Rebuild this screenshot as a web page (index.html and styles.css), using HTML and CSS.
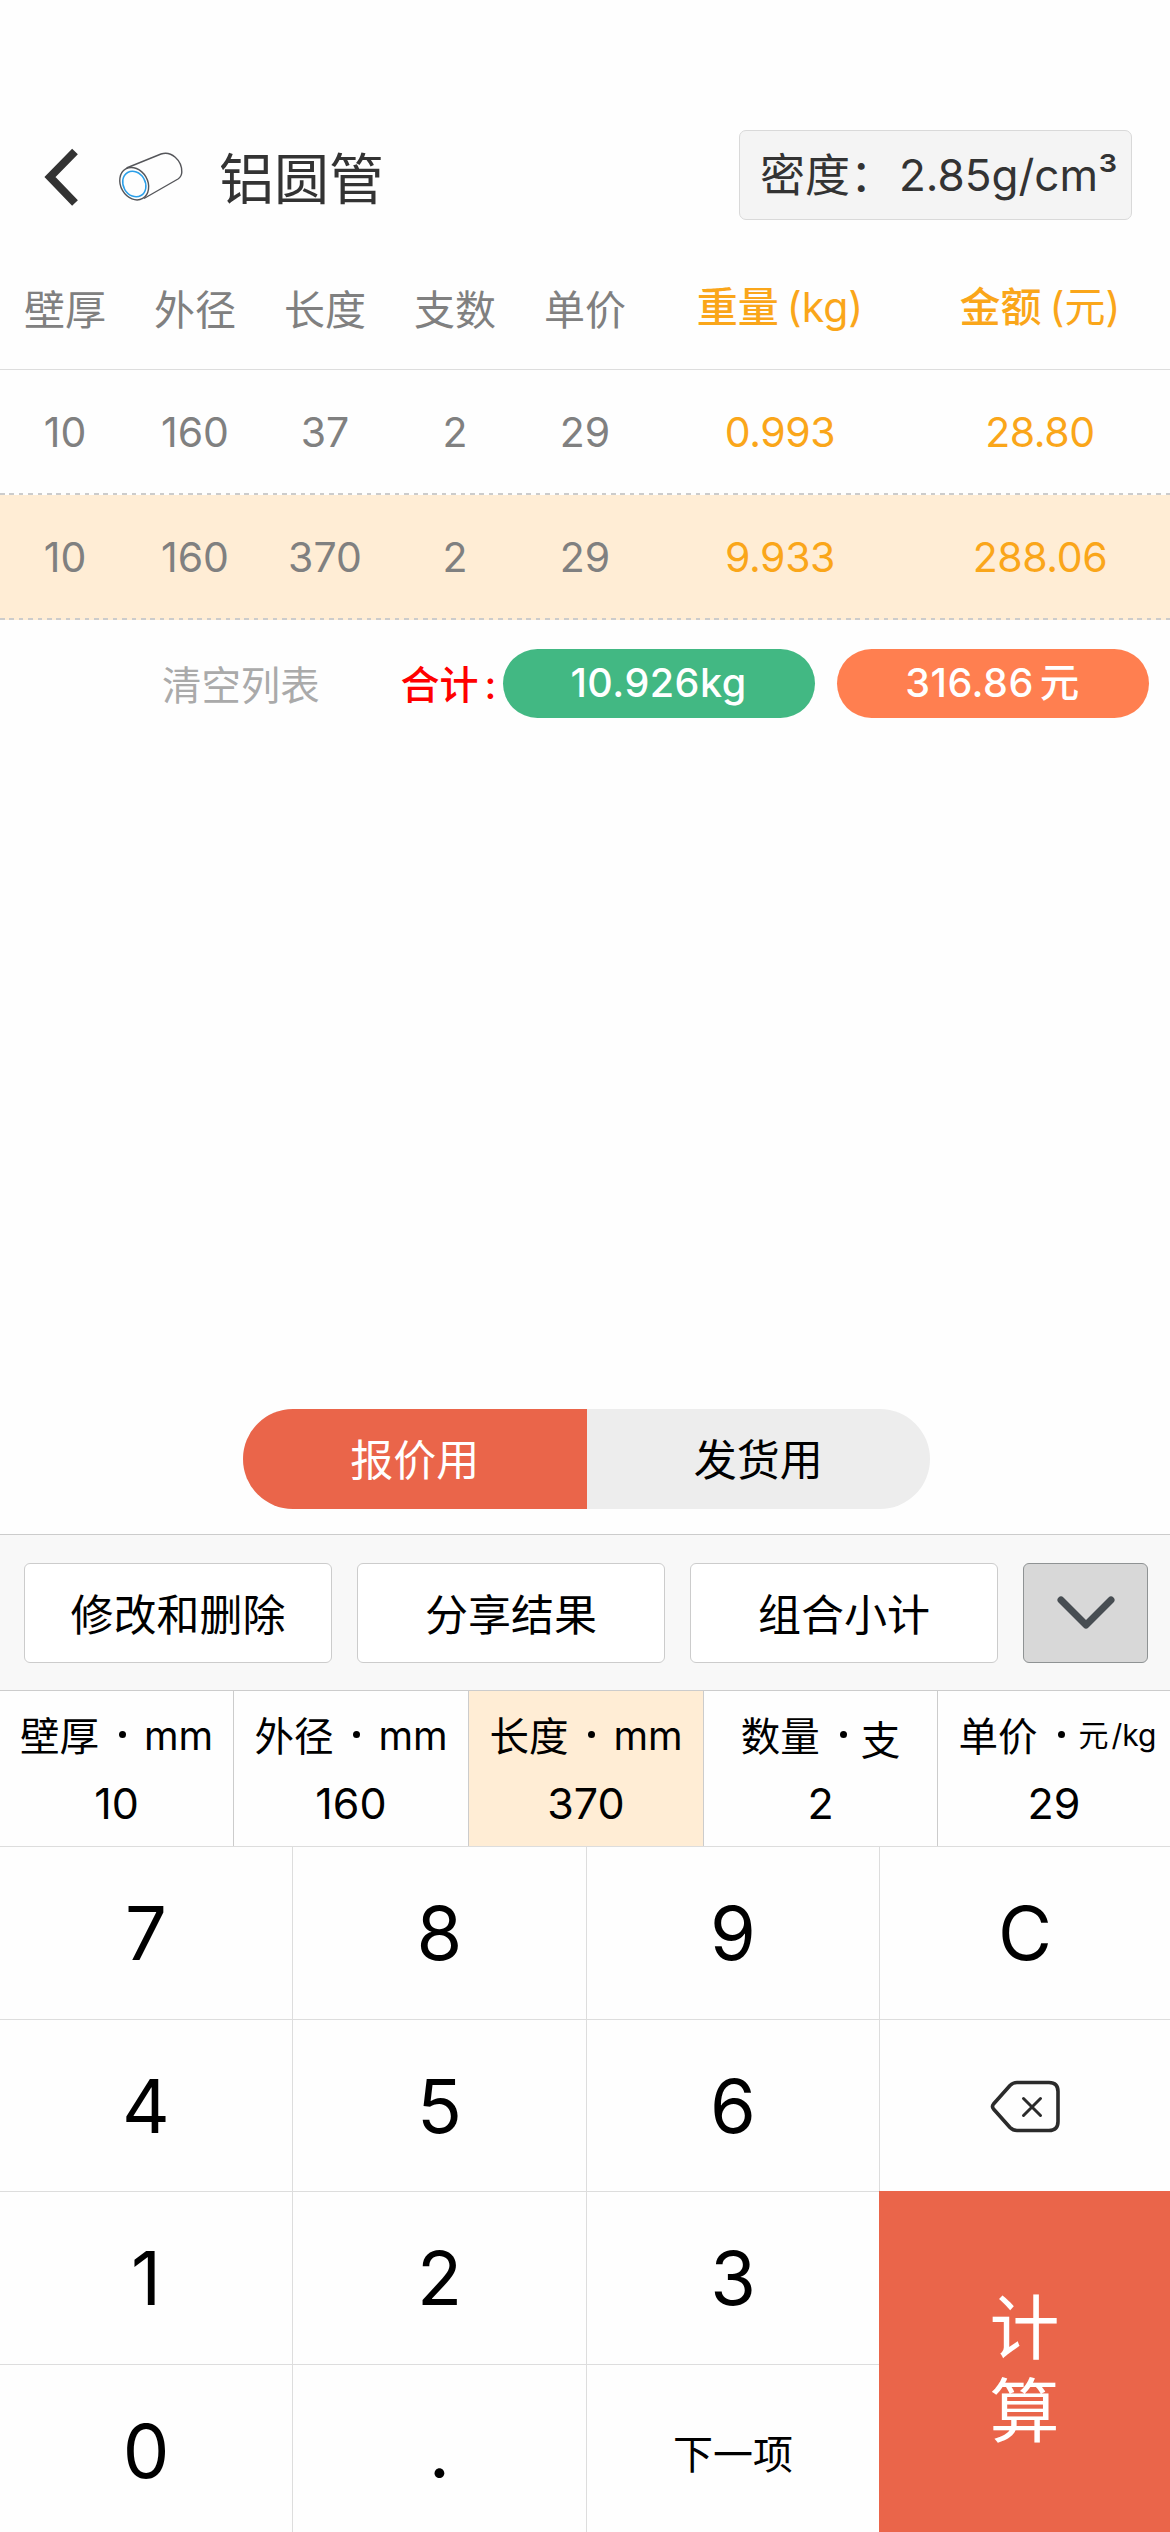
FILE: index.html
```html
<!DOCTYPE html>
<html lang="zh-CN">
<head>
<meta charset="utf-8">
<title>铝圆管</title>
<link rel="stylesheet" href="styles.css">
</head>
<body>
<main class="app">
  <header class="header">
    <svg class="back" viewBox="0 0 36 60" width="36" height="60"><path d="M32 4.500 7 30 32 56" fill="none" stroke="#333" stroke-width="8"/></svg>
    <svg class="tube" viewBox="0 0 68 56" width="68" height="56" fill="none">
      <g stroke="#55565a" stroke-width="1.400">
        <ellipse cx="17.200" cy="35.700" rx="13.500" ry="17" transform="rotate(-30 17.200 35.700)"/>
        <path d="M9.500 20 44 6C54 2.500 65 12 64.800 24Q64.700 28.500 61 31L27 50.500"/>
      </g>
      <ellipse cx="17.300" cy="36" rx="11" ry="13.300" transform="rotate(-30 17.300 36)" stroke="#2b9fe8" stroke-width="1.500"/>
    </svg>
    <h1 class="title">铝圆管</h1>
    <div class="density">密度：<span class="density-value">2.85g/cm³</span></div>
  </header>

  <section class="table">
    <div class="row head">
      <span>壁厚</span><span>外径</span><span>长度</span><span>支数</span><span>单价</span>
      <span class="gold">重量<i class="latin">(kg)</i></span><span class="gold">金额<i class="latin">(元)</i></span>
    </div>
    <div class="row">
      <span>10</span><span>160</span><span>37</span><span>2</span><span>29</span>
      <span class="gold">0.993</span><span class="gold">28.80</span>
    </div>
    <div class="row active">
      <span>10</span><span>160</span><span>370</span><span>2</span><span>29</span>
      <span class="gold">9.933</span><span class="gold">288.06</span>
    </div>
  </section>

  <section class="totals">
    <span class="clear">清空列表</span>
    <span class="sum">合计<i class="colon">:</i></span>
    <span class="pill green">10.926kg</span>
    <span class="pill coral">316.86<i class="unit">元</i></span>
  </section>

  <div class="toggle"><span class="on">报价用</span><span>发货用</span></div>

  <section class="actions">
    <button class="btn">修改和删除</button>
    <button class="btn">分享结果</button>
    <button class="btn">组合小计</button>
    <button class="btn collapse"><svg viewBox="0 0 60 36" width="60" height="36"><path d="M5 5 30 30 55 5" fill="none" stroke="#474d52" stroke-width="7" stroke-linecap="round" stroke-linejoin="round"/></svg></button>
  </section>

  <section class="fields">
    <div class="field"><div class="label"><span>壁厚</span><b></b><span class="mm">mm</span></div><div class="value">10</div></div>
    <div class="field"><div class="label"><span>外径</span><b></b><span class="mm">mm</span></div><div class="value">160</div></div>
    <div class="field active"><div class="label"><span>长度</span><b></b><span class="mm">mm</span></div><div class="value">370</div></div>
    <div class="field"><div class="label"><span>数量</span><b></b><span class="zhi">支</span></div><div class="value">2</div></div>
    <div class="field"><div class="label price"><span>单价</span><b></b><span class="per">元<i>/kg</i></span></div><div class="value">29</div></div>
  </section>

  <section class="keypad">
    <div class="key">7</div><div class="key">8</div><div class="key">9</div><div class="key last">C</div>
    <div class="key">4</div><div class="key">5</div><div class="key">6</div>
    <div class="key last"><svg viewBox="0 0 72 54" width="72" height="54" fill="none" stroke="#2b2b2b" stroke-linecap="round" stroke-linejoin="round"><path stroke-width="3.600" d="M28 3.500H60Q69 3.500 69 12.500V42.500Q69 51.500 60 51.500H28Q24 51.500 21 48.500L4.500 30Q2.500 27.500 4.500 25L21 6.500Q24 3.500 28 3.500Z"/><path stroke-width="3" d="M34.500 19.500 51.500 36.500M51.500 19.500 34.500 36.500"/></svg></div>
    <div class="key">1</div><div class="key">2</div><div class="key">3</div>
    <div class="key">0</div><div class="key">.</div><div class="key next">下一项</div>
    <div class="key calc"><span>计</span><span>算</span></div>
  </section>
</main>
</body>
</html>
```
FILE: styles.css
```css
* { box-sizing: border-box; }
html, body { margin: 0; }
body {
  width: 1170px;
  height: 2532px;
  background: #fefefe;
  color: #000;
  font-family: Inter, "Noto Sans CJK SC", sans-serif;
}
i { font-style: normal; }
.app { display: flex; flex-direction: column; height: 2532px; overflow: hidden; }
.app > * { flex-shrink: 0; }

.header {
  display: flex;
  align-items: center;
  height: 250px;
  padding: 100px 38px 0 43px;
  color: #333;
}
.back { margin-top: 3px; }
.tube { margin: 2px 0 0 38px; }
.title { margin: 7px 0 0 34px; font-size: 55px; font-weight: 400; line-height: 80px; }
.density {
  display: flex;
  align-items: center;
  width: 393px;
  height: 90px;
  margin-left: auto;
  padding: 0 0 5px 20px;
  border: 1px solid #d9d9d9;
  border-radius: 7px;
  background: #f4f4f4;
  font-size: 45px;
  white-space: nowrap;
}
.density-value { margin-left: 4px; padding-top: 5px; font-size: 44px; }

.row {
  display: grid;
  grid-template-columns: repeat(5, 130px) 260px 260px;
  align-items: center;
  height: 125px;
  padding-bottom: 2px;
  text-align: center;
  color: #808080;
  font-size: 41px;
  background: repeating-linear-gradient(90deg, #ccc 0 4.700px, transparent 4.700px 9.400px) 0 100% / 100% 2px no-repeat;
}
.row.head { height: 120px; padding-bottom: 6px; background: none; border-bottom: 1px solid #ddd; }
.row.active { background-color: #ffedd5; }
.gold { color: #faa61a; letter-spacing: -0.4px; }
.head .gold { margin-top: -6px; font-weight: 500; letter-spacing: 0; }
.latin { margin-left: 8px; font-weight: 400; }

.totals { display: flex; align-items: center; height: 129px; padding: 0 21px 2px 0; }
.clear { margin: -3px 0 0 162px; color: #aaa; font-size: 39.400px; }
.sum { width: 102px; margin: -3px 0 0 81px; color: #f00; font-size: 39px; font-weight: 500; white-space: nowrap; }
.colon { margin-left: 6px; }
.pill {
  width: 312px;
  height: 69px;
  border-radius: 35px;
  color: #fff;
  font-size: 39.500px;
  font-weight: 500;
  letter-spacing: 0.5px;
  line-height: 69px;
  text-align: center;
}
.green { background: #42b883; }
.coral { margin-left: 22px; background: #ff7f50; }
.unit { margin-left: 6px; }

.toggle {
  display: flex;
  width: 687px;
  height: 100px;
  margin: 660px 0 25px 243px;
  border-radius: 50px;
  overflow: hidden;
  background: #ededed;
  font-size: 43px;
  line-height: 102px;
  text-align: center;
}
.toggle span { flex: 1; }
.toggle .on { background: #ea654a; color: #fff; }

.actions {
  display: flex;
  gap: 25px;
  height: 156px;
  padding: 28px 22px 0 24px;
  border-top: 1px solid #ccc;
  background: #f8f8f8;
}
.btn {
  width: 308px;
  height: 100px;
  padding: 0 0 3px;
  border: 1px solid #ccc;
  border-radius: 6px;
  background: #fff;
  color: #000;
  font: inherit;
  font-size: 43px;
}
.collapse { display: flex; align-items: center; justify-content: center; width: 125px; padding: 0; border-color: #8f9394; background: #d8d8d8; }

.fields {
  display: grid;
  grid-template-columns: 234px 235px 235px 234px 232px;
  height: 157px;
  border-top: 1px solid #ccc;
  border-bottom: 1px solid #ddd;
}
.field { border-right: 1px solid #ccc; text-align: center; }
.field:last-child { border-right: 0; }
.field.active { background: #ffedd5; }
.label { display: flex; justify-content: center; align-items: center; height: 60px; margin-top: 12px; font-size: 39.500px; }
.label b { width: 7px; height: 7px; margin: 2px 18px 0 20px; border-radius: 50%; background: #000; }
.label.price { padding-left: 7px; }
.label.price b { margin: 2px 19px 0 20px; }
.mm { margin-top: 5px; }
.zhi { margin-top: 8px; margin-left: -4px; }
.per { margin-left: -5px; font-size: 30px; }
.per i { margin-left: 3px; }
.value { height: 60px; margin-top: 10px; font-size: 43px; line-height: 60px; }

.keypad {
  display: grid;
  grid-template-columns: 293px 294px 293px 290px;
  grid-template-rows: 173px 172px 173px 173px;
}
.key {
  display: flex;
  align-items: center;
  justify-content: center;
  border-right: 1px solid #ddd;
  border-bottom: 1px solid #ddd;
  font-size: 74px;
}
.key.last { border-right: 0; }
.key.next { padding-top: 1px; font-size: 40px; }
.key.calc {
  grid-column: 4;
  grid-row: 3 / span 2;
  flex-direction: column;
  margin: -1px 0 0 -1px;
  padding-top: 10px;
  border: 0;
  background: #ea654a;
  color: #fff;
  font-size: 70px;
  line-height: 83px;
}
```
